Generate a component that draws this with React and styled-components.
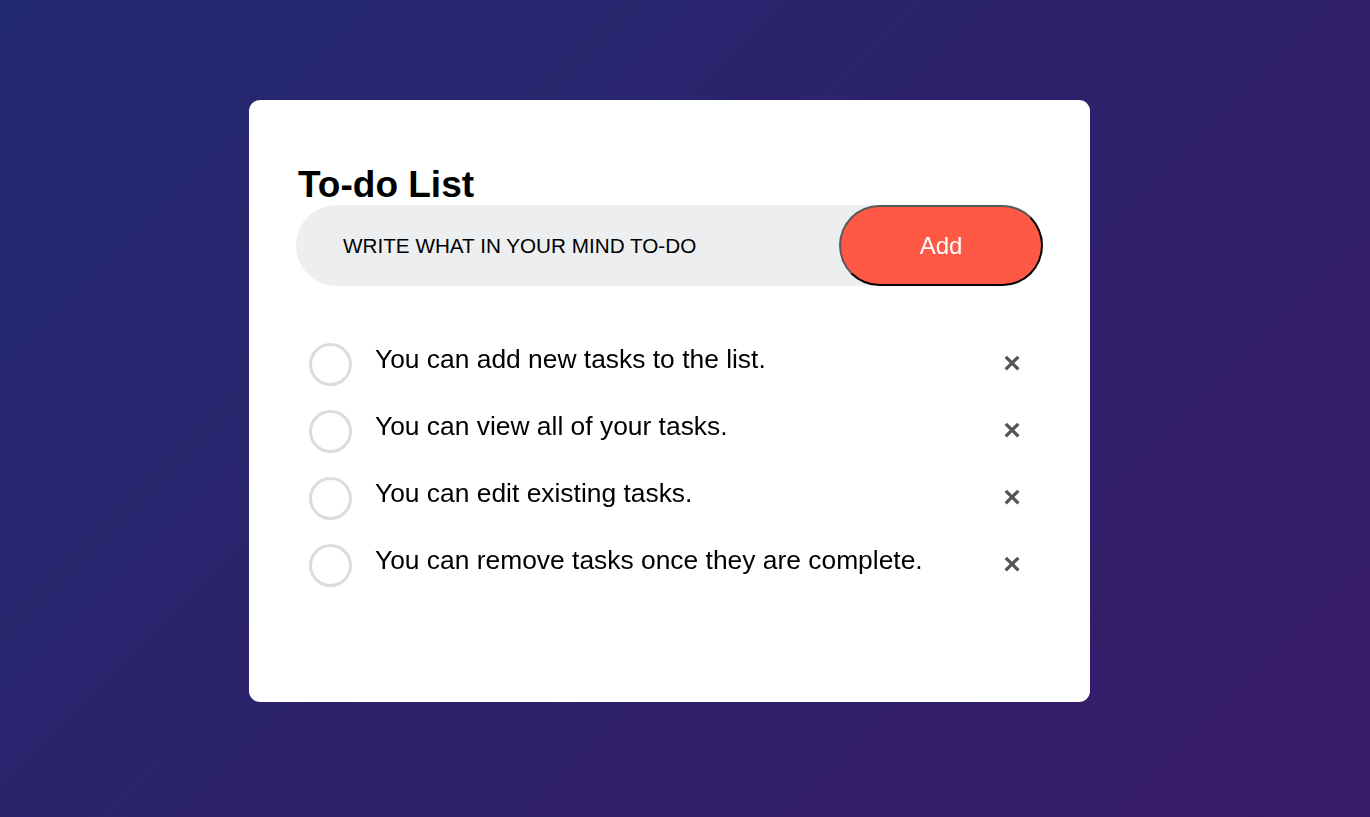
import React, { useEffect, useRef, useState } from 'react'
import styled, { createGlobalStyle } from 'styled-components'

const GlobalStyle = createGlobalStyle`
  * {
    box-sizing: border-box;
  }
  html, body {
    margin: 0;
    padding: 0;
  }
  body {
    min-height: 817px;
    font-family: "Liberation Sans", Arial, sans-serif;
    background: linear-gradient(135deg, #222a70, #381a68);
  }
`

const Container = styled.div`
  width: 100%;
  min-height: 817px;
  padding: 100px 0 0 249px;
`

const TodoApp = styled.div`
  width: 841px;
  height: 602px;
  background: #fff;
  border-radius: 11px;
  padding: 64px 47px 0;
  h2 {
    margin: 0;
    padding-left: 2px;
    font-size: 37px;
    font-weight: 700;
    color: #000;
    line-height: 41px;
  }
`

const Row = styled.div`
  display: flex;
  align-items: center;
  justify-content: space-between;
  height: 81px;
  background: #edeef0;
  border-radius: 41px;
`

const Input = styled.input`
  flex: 1;
  min-width: 0;
  border: none;
  outline: none;
  background: transparent;
  padding: 0 0 0 47px;
  font-family: "Liberation Sans", Arial, sans-serif;
  font-size: 20.7px;
  color: #000;
  caret-color: #000;
`

const AddButton = styled.button`
  width: 204px;
  height: 81px;
  border-radius: 41px;
  background: #ff5945;
  color: #fff;
  font-family: "Liberation Sans", Arial, sans-serif;
  font-size: 24px;
  cursor: pointer;
  border: 2px solid;
  border-color: #5a5a5a #000 #000 #5a5a5a;
  padding: 0;
`

const List = styled.ul`
  list-style: none;
  margin: 57px 0 0;
  padding: 0 11px 0 13px;
  display: flex;
  flex-direction: column;
  gap: 24px;
`

const Item = styled.li`
  display: flex;
  align-items: flex-start;
  height: 43px;
  cursor: pointer;
  user-select: none;
`

const Check = styled.span`
  flex: none;
  width: 43px;
  height: 43px;
  border-radius: 50%;
  border: 3px solid #dcdcdc;
  background: ${p => (p.$done ? '#ff5945' : 'transparent')};
`

const Text = styled.span`
  flex: 1;
  margin: 1px 0 0 23px;
  font-size: 26.4px;
  color: #000;
  text-decoration: ${p => (p.$done ? 'line-through' : 'none')};
`

const Remove = styled.span`
  flex: none;
  width: 40px;
  height: 40px;
  line-height: 40px;
  text-align: center;
  font-size: 30px;
  font-weight: 700;
  color: #555;
  border-radius: 50%;
  &:hover {
    background: #edeef0;
  }
`

const initial = [
  'You can add new tasks to the list.',
  'You can view all of your tasks.',
  'You can edit existing tasks.',
  'You can remove tasks once they are complete.',
]

export default function App() {
  const [value, setValue] = useState('WRITE WHAT IN YOUR MIND TO-DO')
  const [tasks, setTasks] = useState(initial.map(t => ({ text: t, done: false })))
  const inputRef = useRef(null)

  useEffect(() => {
    const el = inputRef.current
    if (el) {
      el.focus()
      el.setSelectionRange(el.value.length, el.value.length)
    }
  }, [])

  const addTask = () => {
    if (!value.trim()) return
    setTasks([...tasks, { text: value, done: false }])
    setValue('')
  }

  return (
    <>
      <GlobalStyle />
      <Container>
        <TodoApp>
          <h2>To-do List</h2>
          <Row>
            <Input
              ref={inputRef}
              value={value}
              onChange={e => setValue(e.target.value)}
              placeholder="Add your text"
            />
            <AddButton onClick={addTask}>Add</AddButton>
          </Row>
          <List>
            {tasks.map((t, i) => (
              <Item
                key={i}
                onClick={() =>
                  setTasks(tasks.map((x, j) => (j === i ? { ...x, done: !x.done } : x)))
                }
              >
                <Check $done={t.done} />
                <Text $done={t.done}>{t.text}</Text>
                <Remove
                  onClick={e => {
                    e.stopPropagation()
                    setTasks(tasks.filter((_, j) => j !== i))
                  }}
                >
                  {'\u00d7'}
                </Remove>
              </Item>
            ))}
          </List>
        </TodoApp>
      </Container>
    </>
  )
}
